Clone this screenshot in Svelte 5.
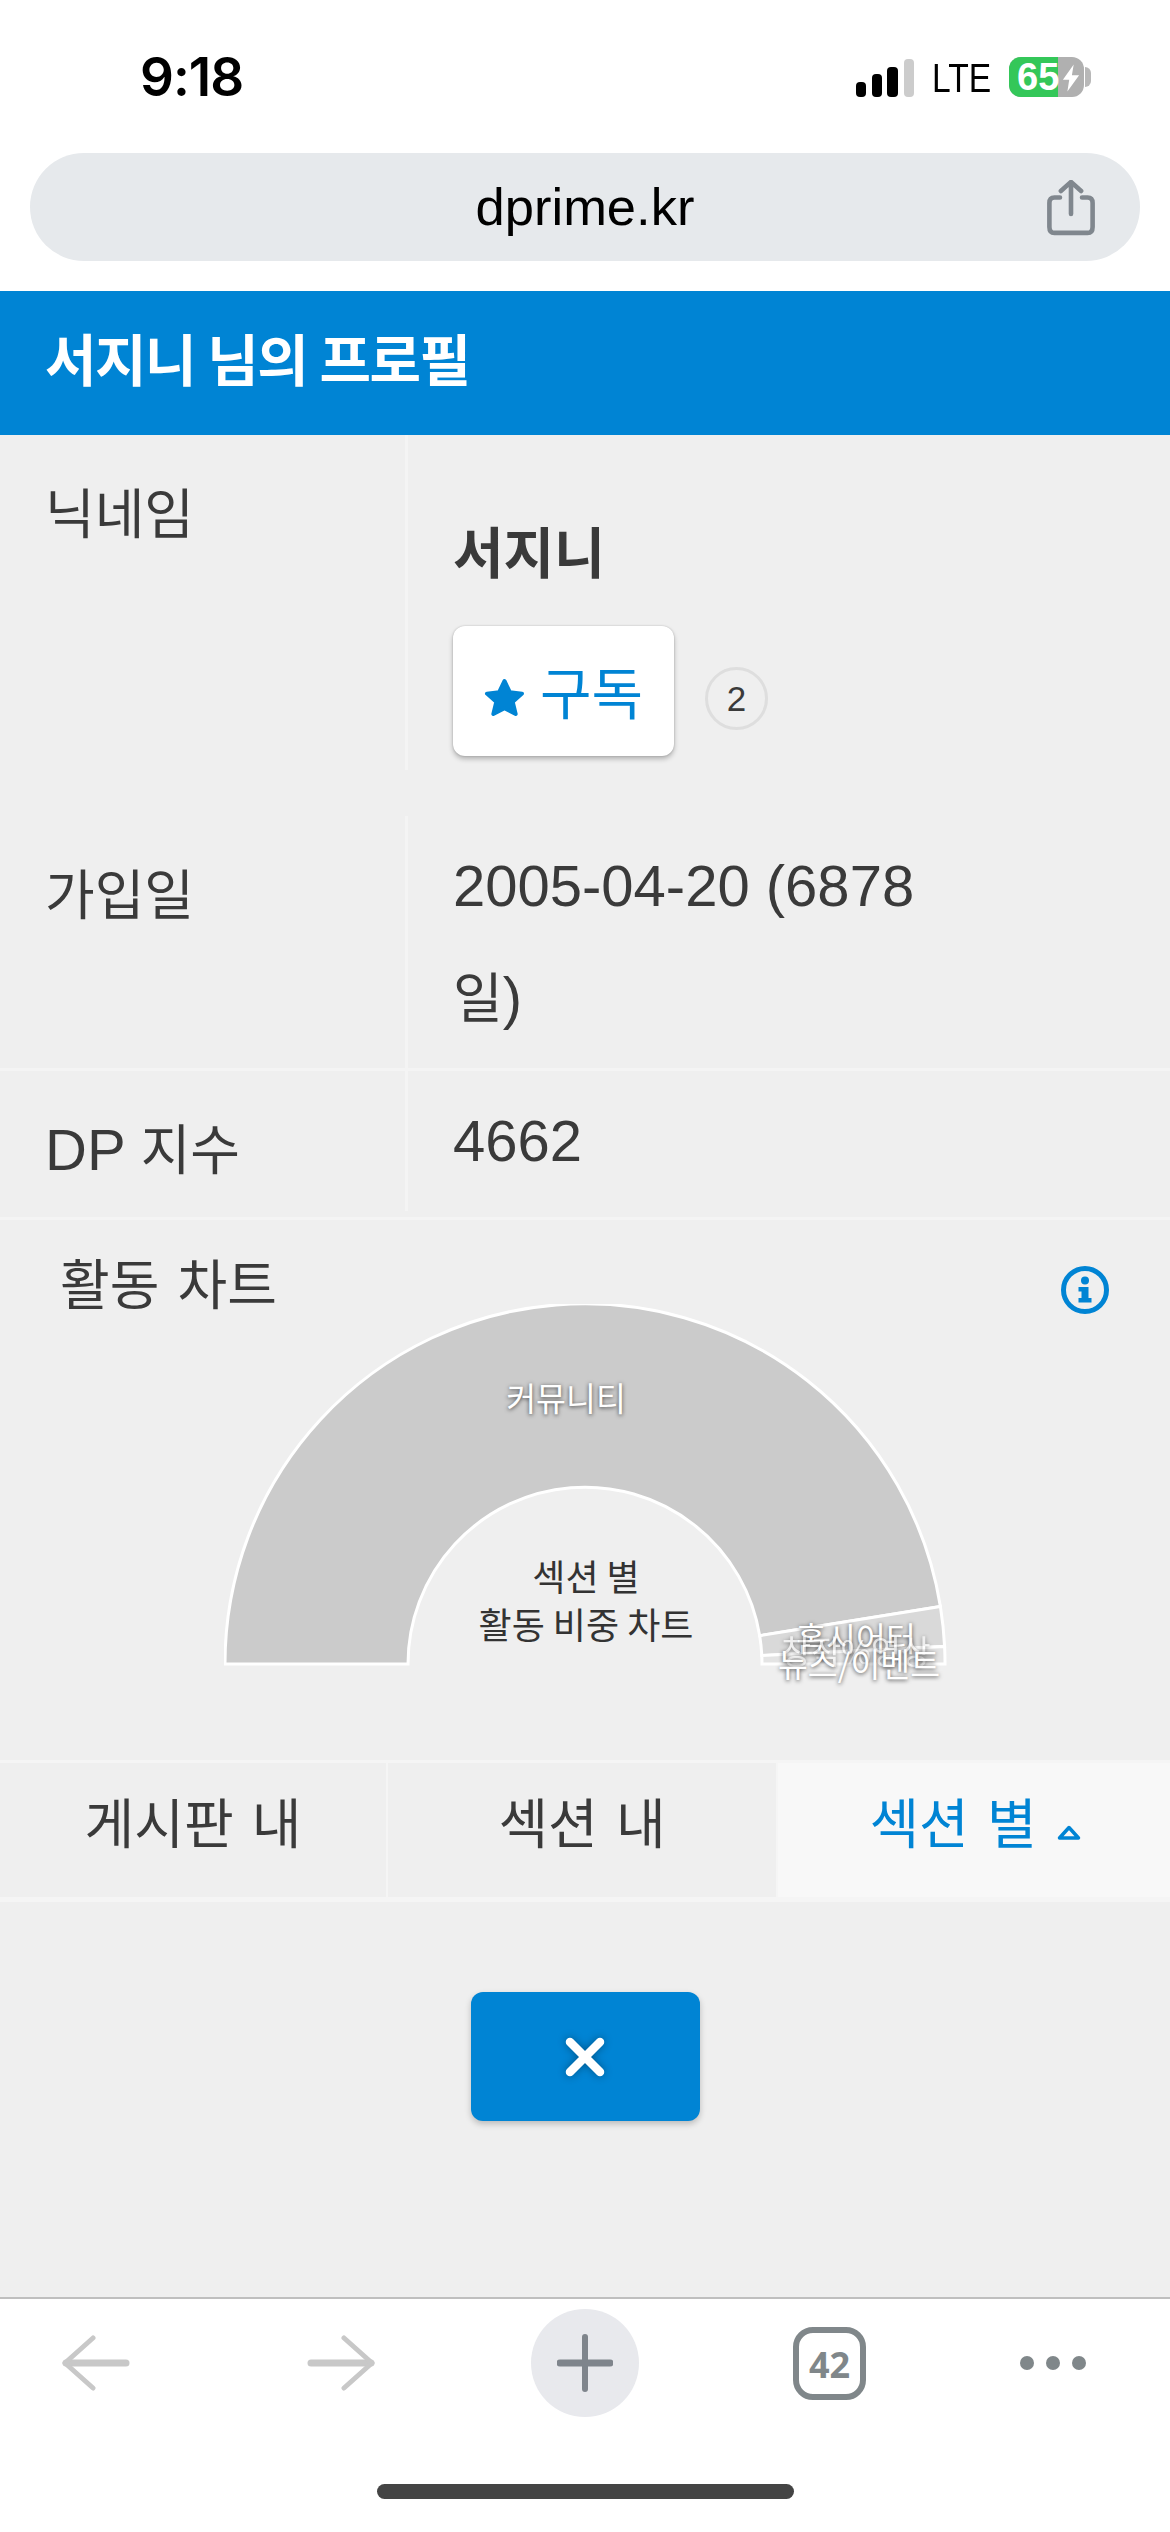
<script>
  const rows = [
    { label: "가입일", value: "2005-04-20 (6878", wrap: "일)" },
  ];
  const tabs = [
    { name: "게시판 내" },
    { name: "섹션 내" },
    { name: "섹션 별", active: true },
  ];

  // half donut, angles in degrees from the right end of the baseline
  const cx = 361;
  const cy = 360;
  const outer = 360;
  const inner = 177;

  function arc(from, to) {
    const p = (r, a) => {
      const rad = (a * Math.PI) / 180;
      return `${(cx + r * Math.cos(rad)).toFixed(1)} ${(cy - r * Math.sin(rad)).toFixed(1)}`;
    };
    return `M${p(outer, from)} A${outer} ${outer} 0 0 0 ${p(outer, to)} L${p(inner, to)} A${inner} ${inner} 0 0 1 ${p(inner, from)} Z`;
  }

  const slices = [
    { from: 9.2, to: 180, fill: "#cbcbcb" },
    { from: 2.8, to: 9.2, fill: "#d9d9d9" },
    { from: 0, to: 2.8, fill: "#e4e4e4" },
  ];
</script>

<div class="page">
  <div class="status">
    <span class="time">9:18</span>
    <div class="status-right">
      <svg class="signal" width="58" height="38" viewBox="0 0 58 38">
        <rect x="0" y="23" width="10" height="15" rx="4" fill="#000" />
        <rect x="16" y="15" width="10" height="23" rx="4" fill="#000" />
        <rect x="31" y="8" width="11" height="30" rx="4" fill="#000" />
        <rect x="48" y="0" width="10" height="38" rx="4" fill="#ccc" />
      </svg>
      <span class="lte">LTE</span>
      <div class="battery">
        <div class="battery-level"></div>
        <span class="battery-num">65</span>
        <svg class="bolt" width="18" height="28" viewBox="0 0 20 30">
          <path d="M13 0 L1 17 H8 L6 30 L19 12 H11 Z" fill="#fff" />
        </svg>
      </div>
      <div class="battery-nub"></div>
    </div>
  </div>

  <div class="urlbar-wrap">
    <div class="urlbar">
      <span class="url">dprime.kr</span>
      <svg class="share" width="48" height="57" viewBox="0 0 52 62" fill="none" stroke="#80878e" stroke-width="5" stroke-linecap="round" stroke-linejoin="round">
        <path d="M14 19 H8 Q2.500 19 2.500 25 V51 Q2.500 57.500 8 57.500 H44 Q49.500 57.500 49.500 51 V25 Q49.500 19 44 19 H38" />
        <path d="M26 37 V3 M15 12 L26 2 L37 12" />
      </svg>
    </div>
  </div>

  <header class="title">서지니 님의 프로필</header>

  <main class="content">
    <div class="row row-nick">
      <div class="cell-label"><span class="ko">닉네임</span></div>
      <div class="cell-value">
        <div class="nick">서지니</div>
        <div class="sub">
          <button class="sub-btn">
            <svg width="41" height="39" viewBox="0 0 42 40">
              <path d="M21 3 L26.500 14.500 L39 16 L29.500 24.500 L32.500 37 L21 31 L9.500 37 L12.500 24.500 L3 16 L15.500 14.500 Z" fill="#0084d4" stroke="#0084d4" stroke-width="4" stroke-linejoin="round" />
            </svg>
            <span class="sub-text">구독</span>
          </button>
          <span class="badge">2</span>
        </div>
      </div>
    </div>

    {#each rows as row}
      <div class="row row-join">
        <div class="cell-label"><span class="ko">{row.label}</span></div>
        <div class="cell-value">
          <div class="val">{row.value}</div>
          <div class="val wrap"><span class="ko">일</span>)</div>
        </div>
      </div>
    {/each}

    <div class="row row-dp">
      <div class="cell-label"><span class="dp">DP</span> <span class="ko">지수</span></div>
      <div class="cell-value"><div class="val">4662</div></div>
    </div>

    <section class="chart">
      <div class="chart-head">
        <span class="chart-title">활동 차트</span>
        <svg width="50" height="50" viewBox="0 0 50 50">
          <circle cx="25" cy="25" r="21.500" fill="none" stroke="#0084d4" stroke-width="5" />
          <circle cx="25" cy="15.500" r="4" fill="#0084d4" />
          <path d="M18.500 22 H28.500 V33 H31.500 V37.500 H18.500 V33 H21.500 V26.500 H18.500 Z" fill="#0084d4" />
        </svg>
      </div>
      <div class="donut">
        <svg width="724" height="364" viewBox="0 0 724 364">
          {#each slices as s}
            <path d={arc(s.from, s.to)} fill={s.fill} stroke="#fff" stroke-width="3" />
          {/each}
        </svg>
        <div class="donut-center">
          <div>섹션 별</div>
          <div>활동 비중 차트</div>
        </div>
        <span class="slice-label" style="left: 342px; top: 93px">커뮤니티</span>
        <span class="slice-label" style="left: 632px; top: 333px">홈시어터</span>
        <span class="slice-label faint" style="left: 632px; top: 346px">창작%영상</span>
        <span class="slice-label" style="left: 635px; top: 359px">뉴스/이벤트</span>
      </div>
    </section>

    <nav class="tabs">
      {#each tabs as tab}
        <div class="tab" class:active={tab.active}>
          <span>{tab.name}</span>
          {#if tab.active}
            <svg class="caret" width="24" height="16" viewBox="0 0 24 16">
              <path d="M12 2.500 L21.500 13 H2.500 Z" fill="none" stroke="#0084d4" stroke-width="3.500" stroke-linejoin="round" />
            </svg>
          {/if}
        </div>
      {/each}
    </nav>

    <div class="close-wrap">
      <button class="close-btn" aria-label="닫기">
        <svg width="40" height="40" viewBox="0 0 40 40">
          <path d="M5 5 L35 35 M35 5 L5 35" stroke="#fff" stroke-width="8.500" stroke-linecap="round" />
        </svg>
      </button>
    </div>
  </main>

  <footer class="toolbar">
    <div class="tools">
      <svg class="back" width="68" height="56" viewBox="0 0 68 56" fill="none" stroke="#c8c8c8" stroke-linecap="round" stroke-linejoin="round">
        <path d="M64 28 H4" stroke-width="7" />
        <path d="M31 3 L3 28 L31 53" stroke-width="5" />
      </svg>
      <svg width="68" height="56" viewBox="0 0 68 56" fill="none" stroke="#c8c8c8" stroke-linecap="round" stroke-linejoin="round">
        <path d="M4 28 H64" stroke-width="7" />
        <path d="M37 3 L65 28 L37 53" stroke-width="5" />
      </svg>
      <div class="plus">
        <svg width="56" height="58" viewBox="0 0 56 58" stroke="#7f858c" stroke-linecap="round">
          <path d="M28 3 V55" stroke-width="6" />
          <path d="M3 29 H53" stroke-width="7" />
        </svg>
      </div>
      <div class="tab-count">42</div>
      <div class="dots"><i></i><i></i><i></i></div>
    </div>
    <div class="home-bar"></div>
  </footer>
</div>

<style>
  :global(body) {
    margin: 0;
    background: #fff;
  }
  .page {
    width: 1170px;
    height: 2532px;
    display: flex;
    flex-direction: column;
    font-family: "Liberation Sans", "Noto Sans CJK KR", sans-serif;
    color: #3a3a3a;
    overflow: hidden;
  }
  .ko {
    font-family: "Noto Sans CJK KR", sans-serif;
    font-size: 54px;
  }

  /* status bar */
  .status {
    height: 153px;
    box-sizing: border-box;
    padding: 56px 79px 0 140px;
    display: flex;
    justify-content: space-between;
    align-items: flex-start;
  }
  .time {
    font-family: Inter, sans-serif;
    font-size: 53px;
    font-weight: 600;
    line-height: 42px;
    color: #000;
    letter-spacing: -1px;
  }
  .status-right {
    display: flex;
    align-items: flex-start;
    margin-top: 1px;
  }
  .signal {
    margin-top: 2px;
  }
  .lte {
    margin-left: 18px;
    font-size: 41px;
    line-height: 42px;
    color: #000;
    width: 77px;
    display: inline-block;
    transform: scaleX(0.82);
    transform-origin: left center;
  }
  .battery {
    position: relative;
    width: 75px;
    height: 40px;
    border-radius: 12px;
    background: #b0b0b0;
    overflow: hidden;
  }
  .battery-level {
    width: 49px;
    height: 100%;
    background: #34c759;
  }
  .battery-num {
    position: absolute;
    left: 8px;
    top: 0;
    font-size: 38px;
    line-height: 40px;
    font-weight: 700;
    color: #fff;
  }
  .bolt {
    position: absolute;
    left: 53px;
    top: 7px;
  }
  .battery-nub {
    width: 6px;
    height: 20px;
    margin: 10px 0 0 1px;
    background: #b8b8b8;
    border-radius: 0 6px 6px 0;
  }

  /* url bar */
  .urlbar-wrap {
    height: 138px;
    padding: 0 30px;
  }
  .urlbar {
    position: relative;
    height: 108px;
    border-radius: 54px;
    background: #e6e9ec;
    display: flex;
    align-items: center;
    justify-content: center;
  }
  .url {
    font-size: 52.500px;
    color: #000;
    margin-top: -2px;
  }
  .share {
    position: absolute;
    right: 45px;
    top: 27px;
  }

  .title {
    height: 144px;
    box-sizing: border-box;
    padding: 0 45px;
    background: #0084d4;
    color: #fff;
    font-family: "Noto Sans CJK KR", sans-serif;
    font-size: 56px;
    font-weight: 700;
    line-height: 132px;
    letter-spacing: -1.500px;
    word-spacing: 1px;
  }

  .content {
    flex: 1;
    background: #efefef;
    display: flex;
    flex-direction: column;
  }

  /* profile rows */
  .row {
    display: grid;
    grid-template-columns: 408px 1fr;
    box-sizing: border-box;
    border-bottom: 3px solid #f4f4f4;
    align-items: start;
  }
  .cell-label {
    padding-left: 45px;
    border-right: 3px solid #f4f4f4;
    box-sizing: border-box;
    font-size: 58px;
    line-height: 80px;
  }
  .cell-value {
    padding-left: 45px;
  }
  .row-nick {
    height: 381px;
    border-bottom: none;
  }
  .row-nick .cell-label {
    padding-top: 36px;
    height: 335px;
  }
  .nick {
    font-family: "Noto Sans CJK KR", sans-serif;
    font-size: 55px;
    font-weight: 700;
    line-height: 80px;
    margin-top: 74px;
  }
  .sub {
    display: flex;
    align-items: center;
    margin-top: 37px;
  }
  .sub-btn {
    width: 221px;
    height: 130px;
    padding: 0 0 0 31px;
    border: none;
    border-radius: 12px;
    background: #fff;
    box-shadow: 0 3px 5px rgba(0, 0, 0, 0.25), 0 0 2px rgba(0, 0, 0, 0.2);
    display: flex;
    align-items: center;
    gap: 15px;
  }
  .sub-btn svg {
    margin-top: 12px;
  }
  .sub-text {
    font-family: "Noto Sans CJK KR", sans-serif;
    font-size: 56px;
    line-height: 80px;
    color: #0084d4;
    margin-top: -2px;
  }
  .badge {
    width: 63px;
    height: 63px;
    margin: 14px 0 0 31px;
    box-sizing: border-box;
    border: 3px solid #dedede;
    border-radius: 50%;
    font-size: 35px;
    line-height: 57px;
    text-align: center;
  }
  .val {
    font-size: 58px;
    line-height: 109px;
  }
  .row-join {
    height: 255px;
  }
  .row-join .cell-label {
    padding-top: 36px;
    height: 252px;
  }
  .row-join .val:first-child {
    margin-top: 15px;
  }
  .row-dp {
    height: 149px;
  }
  .row-dp .cell-label {
    padding-top: 36px;
    height: 140px;
  }
  .row-dp .val {
    margin-top: 15px;
  }
  .dp {
    font-size: 58px;
  }

  /* chart */
  .chart {
    height: 540px;
    box-sizing: border-box;
    padding: 35px 60px 0 60px;
  }
  .chart-head {
    height: 54px;
    display: flex;
    justify-content: space-between;
    align-items: center;
  }
  .chart-title {
    font-family: "Noto Sans CJK KR", sans-serif;
    font-size: 54px;
    line-height: 60px;
    word-spacing: 6px;
  }
  .chart-head svg {
    margin-top: 16px;
  }
  .donut {
    position: relative;
    width: 724px;
    height: 364px;
    margin: -5px 0 0 164px;
  }
  .donut svg {
    display: block;
  }
  .donut-center {
    position: absolute;
    left: 0;
    right: 0;
    top: 247px;
    text-align: center;
    font-family: "Noto Sans CJK KR", sans-serif;
    font-size: 36px;
    line-height: 48px;
    color: #333;
  }
  .slice-label {
    position: absolute;
    transform: translate(-50%, -50%);
    font-family: "Noto Sans CJK KR", sans-serif;
    font-size: 32.500px;
    line-height: 40px;
    white-space: nowrap;
    color: #fff;
    text-shadow: 0 1px 4px rgba(0, 0, 0, 0.7);
  }
  .faint {
    opacity: 0.6;
  }

  /* tabs */
  .tabs {
    display: grid;
    grid-template-columns: 388px 390px 1fr;
    height: 142px;
    box-sizing: border-box;
    border-top: 3px solid #f5f5f5;
    border-bottom: 5px solid #f5f5f5;
  }
  .tab {
    display: flex;
    align-items: center;
    justify-content: center;
    gap: 20px;
    padding-bottom: 20px;
    font-family: "Noto Sans CJK KR", sans-serif;
    font-size: 54px;
    word-spacing: 6px;
    border-right: 2px solid #f5f5f5;
    box-sizing: border-box;
  }
  .tab.active {
    background: #f8f8f8;
    color: #0084d4;
    border-right: none;
    padding-left: 2px;
  }
  .caret {
    margin-top: 26px;
  }

  .close-wrap {
    display: flex;
    justify-content: center;
    padding-top: 90px;
  }
  .close-btn {
    width: 229px;
    height: 129px;
    padding: 0;
    border: none;
    border-radius: 12px;
    background: #0084d4;
    box-shadow: 0 3px 6px rgba(0, 0, 0, 0.22);
    display: flex;
    align-items: center;
    justify-content: center;
  }
  .close-btn svg {
    filter: drop-shadow(0 0 4px rgba(0, 0, 0, 0.35));
  }

  /* bottom toolbar */
  .toolbar {
    height: 235px;
    box-sizing: border-box;
    border-top: 2px solid #bfbfbf;
    background: #fff;
    display: flex;
    flex-direction: column;
    padding-top: 10px;
  }
  .tools {
    height: 108px;
    padding-left: 62px;
    display: flex;
    align-items: center;
    gap: 154px;
  }
  .back {
    margin-right: 23px;
  }
  .plus {
    width: 108px;
    height: 108px;
    margin-left: 2px;
    border-radius: 50%;
    background: #e8e9ed;
    display: flex;
    align-items: center;
    justify-content: center;
  }
  .tab-count {
    width: 73px;
    height: 73px;
    box-sizing: border-box;
    border: 6px solid #80878a;
    border-radius: 20px;
    font-family: "Noto Sans", sans-serif;
    font-size: 36px;
    font-weight: 700;
    line-height: 63px;
    text-align: center;
    color: #80878a;
  }
  .dots {
    display: flex;
    gap: 12px;
  }
  .dots i {
    width: 14px;
    height: 14px;
    border-radius: 50%;
    background: #80878a;
  }
  .home-bar {
    width: 417px;
    height: 15px;
    margin: 67px auto 0;
    border-radius: 8px;
    background: #444;
  }
</style>
